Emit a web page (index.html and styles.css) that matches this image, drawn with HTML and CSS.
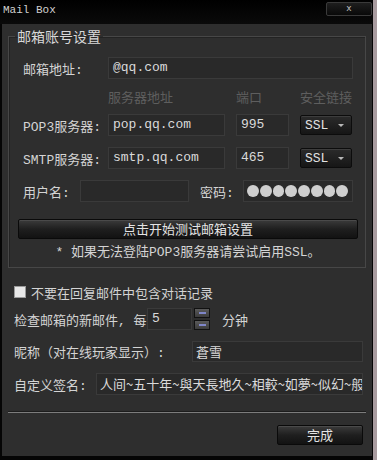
FILE: index.html
```html
<!DOCTYPE html>
<html lang="zh">
<head>
    <meta charset="UTF-8">
    <title>Mail Box</title>
    <link rel="stylesheet" href="styles.css">
</head>
<body>
    <div class="window">
        <div class="titlebar">
            <span class="title">Mail Box</span>
            <span class="close">x</span>
        </div>

        <div class="panel">
            <fieldset class="grupo">
                <legend>邮箱账号设置</legend>

                <div class="row">
                    <span class="lbl">邮箱地址:</span>
                    <div class="field grow">@qq.com</div>
                </div>

                <div class="cols">
                    <span class="col-server">服务器地址</span>
                    <span class="col-port">端口</span>
                    <span>安全链接</span>
                </div>

                <div class="row">
                    <span class="lbl">POP3服务器:</span>
                    <div class="field server">pop.qq.com</div>
                    <div class="field port">995</div>
                    <div class="select">SSL<span class="arrow"></span></div>
                </div>

                <div class="row gap">
                    <span class="lbl">SMTP服务器:</span>
                    <div class="field server">smtp.qq.com</div>
                    <div class="field port">465</div>
                    <div class="select">SSL<span class="arrow"></span></div>
                </div>

                <div class="row gap">
                    <span class="lbl-user">用户名:</span>
                    <div class="field user"></div>
                    <span class="lbl-pass">密码:</span>
                    <div class="field pass">
                        <i></i><i></i><i></i><i></i><i></i><i></i><i></i><i></i>
                    </div>
                </div>

                <div class="btn btn-test">点击开始测试邮箱设置</div>
                <p class="nota">* 如果无法登陆POP3服务器请尝试启用SSL。</p>
            </fieldset>

            <div class="opciones">
                <div class="row check-row">
                    <span class="checkbox"></span>
                    <span>不要在回复邮件中包含对话记录</span>
                </div>

                <div class="row gap-small">
                    <span class="lbl-check">检查邮箱的新邮件, 每</span>
                    <div class="field minutes">5</div>
                    <div class="spin">
                        <span></span>
                        <span></span>
                    </div>
                    <span class="unit">分钟</span>
                </div>

                <div class="row gap nick-row">
                    <span class="lbl-nick">昵称（对在线玩家显示）:</span>
                    <div class="field grow sans">蒼雪</div>
                </div>

                <div class="row gap">
                    <span class="lbl-sig">自定义签名:</span>
                    <div class="field grow sans firma">人间~五十年~與天長地久~相較~如夢~似幻~般</div>
                </div>

                <div class="separador"></div>

                <div class="pie">
                    <div class="btn btn-ok">完成</div>
                </div>
            </div>
        </div>
    </div>
</body>
</html>
```

FILE: styles.css
```css
body {
    margin: 0;
    width: 377px;
    height: 460px;
    overflow: hidden;
    background: linear-gradient(to right, #0b0f0e 373px, #a99ca0 373px);
    font-family: "Liberation Mono", "Noto Sans CJK SC", monospace;
    font-size: 13px;
    color: #d4d4d4;
}
.window {
    width: 373px;
    height: 460px;
    background: #050505;
}
.titlebar {
    height: 24px;
    display: flex;
    justify-content: space-between;
    align-items: flex-start;
    background: linear-gradient(#000, #0a0a0a);
}
.title {
    padding: 3px 0 0 3px;
    font-size: 11px;
    line-height: 14px;
    color: #d0d0d0;
}
.close {
    margin: 2px 1px 0 0;
    width: 44px;
    height: 12px;
    border: 1px solid #3a3a3a;
    border-radius: 2px;
    background: linear-gradient(#1e1e1e, #090909);
    color: #bbb;
    font-family: "DejaVu Sans", sans-serif;
    font-size: 9px;
    line-height: 11px;
    text-align: center;
}
.panel {
    margin-left: 2px;
    width: 370px;
    height: 432px;
    box-sizing: border-box;
    padding-top: 4px;
    background: #2e2e2e;
}
.grupo {
    min-width: 0;
    margin: 0 6px;
    padding: 13px 12px 7px 14px;
    border: 1px solid #474747;
    box-shadow: inset 1px 1px 0 #232323;
}
.grupo legend {
    margin-left: -8px;
    padding: 0 2px;
    font-family: "Noto Sans CJK SC", sans-serif;
    font-size: 14px;
    line-height: 16px;
    color: #d8d8d8;
}
.row {
    display: flex;
    align-items: center;
    height: 22px;
}
.gap {
    margin-top: 11px;
}
.gap-small {
    margin-top: 8px;
}
.lbl {
    width: 85px;
}
.field {
    height: 22px;
    box-sizing: border-box;
    padding: 0 4px;
    line-height: 20px;
    background: #292929;
    border: 1px solid #3a3a3a;
    color: #dadada;
    white-space: nowrap;
    overflow: hidden;
}
.grow {
    flex: 1;
    min-width: 0;
}
.sans {
    font-family: "Noto Sans CJK SC", sans-serif;
    padding-left: 3px;
}
.server {
    width: 117px;
}
.port {
    width: 53px;
    margin-left: 11px;
}
.select {
    position: relative;
    width: 52px;
    height: 20px;
    margin-left: 11px;
    box-sizing: border-box;
    padding-left: 4px;
    line-height: 20px;
    border: 1px solid #0c0c0c;
    border-radius: 2px;
    background: linear-gradient(#2b2b2b, #161616);
    box-shadow: inset 0 1px 0 #3d3d3d;
    color: #e2e2e2;
}
.select .arrow {
    position: absolute;
    right: 7px;
    top: 8px;
    border-left: 3px solid transparent;
    border-right: 3px solid transparent;
    border-top: 3px solid #b8b8b8;
}
.cols {
    height: 35px;
    display: flex;
    align-items: center;
    padding-left: 85px;
    color: #5e5e5e;
}
.col-server {
    width: 128px;
}
.col-port {
    width: 64px;
}
.lbl-user {
    width: 57px;
}
.user {
    width: 109px;
}
.lbl-pass {
    width: 43px;
    margin-left: 11px;
}
.pass {
    flex: 1;
    display: flex;
    align-items: center;
    gap: 1px;
    padding-left: 3px;
}
.pass i {
    width: 12px;
    height: 12px;
    border-radius: 50%;
    background: #cfcfcf;
}
.btn {
    height: 20px;
    box-sizing: border-box;
    border: 1px solid #0a0a0a;
    border-radius: 2px;
    background: linear-gradient(#3b3b3b, #1f1f1f 50%, #121212);
    box-shadow: inset 0 1px 0 #4a4a4a;
    font-family: "Noto Sans CJK SC", sans-serif;
    font-size: 13px;
    line-height: 18px;
    text-align: center;
    color: #e4e4e4;
}
.btn-test {
    margin: 17px -5px 0 -5px;
}
.nota {
    margin: 7px 0 0;
    line-height: 14px;
    text-align: center;
}
.opciones {
    padding: 0 9px 0 12px;
}
.check-row {
    margin-top: 16px;
    height: 16px;
}
.checkbox {
    width: 10px;
    height: 10px;
    margin-right: 5px;
    background: #e8e8e8;
    border: 1px solid #9a9a9a;
}
.lbl-check {
    width: 133px;
}
.minutes {
    width: 45px;
}
.spin {
    display: flex;
    flex-direction: column;
    gap: 2px;
    margin-left: 2px;
}
.spin span {
    width: 16px;
    height: 10px;
    box-sizing: border-box;
    border: 1px solid #111;
    background: linear-gradient(#5a5a5a, #3c3c3c);
    position: relative;
}
.spin span::after {
    content: "";
    position: absolute;
    left: 4px;
    top: 3px;
    width: 7px;
    height: 2px;
    background: #7f86c8;
}
.unit {
    margin-left: 12px;
}
.nick-row {
    height: 21px;
}
.nick-row .field {
    height: 21px;
}
.lbl-nick {
    width: 178px;
}
.lbl-sig {
    width: 82px;
}
.separador {
    margin: 16px -3px 0 -6px;
    border-top: 1px solid #1c1c1c;
    border-bottom: 1px solid #7c7c7c;
}
.pie {
    display: flex;
    justify-content: flex-end;
    margin-top: 12px;
}
.btn-ok {
    width: 86px;
}
```
